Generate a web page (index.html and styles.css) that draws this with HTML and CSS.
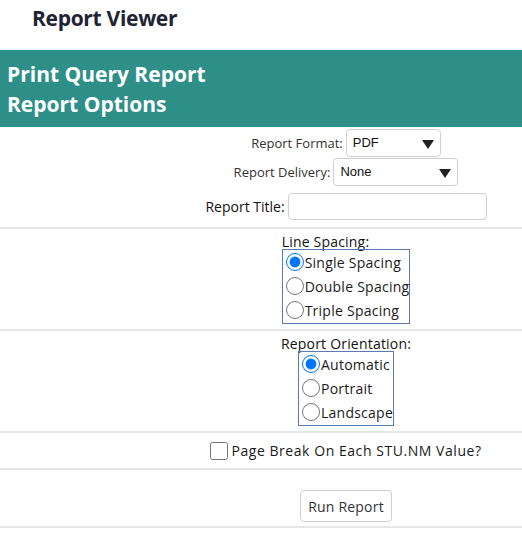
FILE: index.html
```html
<!DOCTYPE html>
<html>
<head>
<meta charset="utf-8">
<link rel="stylesheet" href="styles.css">
</head>
<body>
<h1 class="page-title">Report Viewer</h1>
<div class="banner">
  <div class="banner-line">Print Query Report</div>
  <div class="banner-line">Report Options</div>
</div>
<div class="form">
  <div class="section section-fields">
    <div class="field">
      <label class="lbl">Report Format:</label>
      <span class="select sel-format"><span class="sel-text">PDF</span><span class="caret"></span></span>
    </div>
    <div class="field">
      <label class="lbl">Report Delivery:</label>
      <span class="select sel-delivery"><span class="sel-text">None</span><span class="caret"></span></span>
    </div>
    <div class="field field-title">
      <label class="lbl lbl-dark">Report Title:</label>
      <input class="text-input" type="text">
    </div>
  </div>
  <div class="section section-radio">
    <div class="group">
      <div class="group-label">Line Spacing:</div>
      <div class="group-box">
        <label class="opt"><input type="radio" name="sp" checked>Single Spacing</label>
        <label class="opt"><input type="radio" name="sp">Double Spacing</label>
        <label class="opt"><input type="radio" name="sp">Triple Spacing</label>
      </div>
    </div>
  </div>
  <div class="section section-radio">
    <div class="group">
      <div class="group-label">Report Orientation:</div>
      <div class="group-box">
        <label class="opt"><input type="radio" name="or" checked>Automatic</label>
        <label class="opt"><input type="radio" name="or">Portrait</label>
        <label class="opt"><input type="radio" name="or">Landscape</label>
      </div>
    </div>
  </div>
  <div class="section section-check">
    <label class="check"><input type="checkbox">Page Break On Each STU.NM Value?</label>
  </div>
  <div class="section section-button">
    <button class="run-btn" type="button">Run Report</button>
  </div>
</div>
</body>
</html>
```
FILE: styles.css
```css
html, body {
  margin: 0;
  padding: 0;
  background: #fff;
  overflow: hidden;
}
body {
  font-family: "Open Sans", "Noto Sans", sans-serif;
  color: #1b1b1b;
}
.page-title {
  margin: 0;
  height: 50px;
  box-sizing: border-box;
  padding: 4px 0 0 32px;
  font-size: 21px;
  line-height: 28px;
  font-weight: 700;
  color: #1e2433;
  letter-spacing: -0.3px;
}
.banner {
  background: #2e8f88;
  height: 77px;
  box-sizing: border-box;
  padding: 9px 7px 0;
  color: #fff;
}
.banner-line {
  font-size: 21px;
  font-weight: 700;
  line-height: 30px;
}
.form {
  width: 692px;
  text-align: center;
}
.section {
  border-bottom: 2px solid #e6e6e6;
}
.section-fields {
  padding: 1px 0 6px;
  height: 93px;
}
.field {
  display: flex;
  justify-content: center;
  align-items: center;
  gap: 3px;
  height: 29px;
}
.field-title {
  margin-top: 6px;
  height: 28px;
}
.lbl {
  font-size: 13px;
  color: #333;
}
.lbl-dark {
  color: #111;
  font-size: 14px;
}
.select {
  position: relative;
  display: inline-flex;
  align-items: center;
  height: 28px;
  box-sizing: border-box;
  border: 1px solid #cfcfcf;
  border-radius: 4px;
  background: #fff;
  padding-left: 6px;
  font-family: "Liberation Sans", Arial, sans-serif;
  font-size: 13px;
  color: #111;
  text-align: left;
}
.sel-format { width: 95px; }
.sel-delivery { width: 125px; }
.caret {
  position: absolute;
  right: 6px;
  top: 10px;
  width: 0;
  height: 0;
  border-left: 6px solid transparent;
  border-right: 6px solid transparent;
  border-top: 9px solid #222;
}
.text-input {
  width: 199px;
  height: 27px;
  box-sizing: border-box;
  border: 1px solid #cfcfcf;
  border-radius: 4px;
  margin: 0;
}
.section-radio {
  height: 100px;
  display: flex;
  justify-content: center;
}
.section-radio + .section-radio {
  height: 100px;
}
.group {
  display: flex;
  flex-direction: column;
  align-items: center;
  padding-top: 5px;
}
.group-label {
  align-self: flex-start;
  font-size: 14px;
  line-height: 15px;
  color: #111;
  letter-spacing: 0.2px;
}
.group-box {
  border: 1px solid #5b7bb0;
  display: flex;
  flex-direction: column;
  text-align: left;
  padding: 0 0 1px;
}
.opt {
  display: flex;
  align-items: center;
  height: 24px;
  font-size: 14px;
  color: #1a1a1a;
  white-space: nowrap;
  letter-spacing: 0.25px;
}
.opt input {
  width: 18px;
  height: 18px;
  margin: 0 1px 0 3px;
}
.section-check {
  height: 35px;
  display: flex;
  justify-content: center;
  align-items: center;
}
.check {
  display: flex;
  align-items: center;
  font-size: 14px;
  color: #1a1a1a;
  letter-spacing: 0.55px;
}
.check input {
  width: 18px;
  height: 18px;
  margin: 0 3px 0 0;
}
.section-button {
  height: 58px;
  display: flex;
  justify-content: center;
  align-items: flex-start;
  box-sizing: border-box;
}
.run-btn {
  margin-top: 20px;
  width: 92px;
  height: 32px;
  border: 1px solid #cfcfcf;
  border-radius: 4px;
  background: #fff;
  font-family: "Open Sans", "Noto Sans", sans-serif;
  font-size: 14px;
  color: #333;
  letter-spacing: 0.2px;
}
```
